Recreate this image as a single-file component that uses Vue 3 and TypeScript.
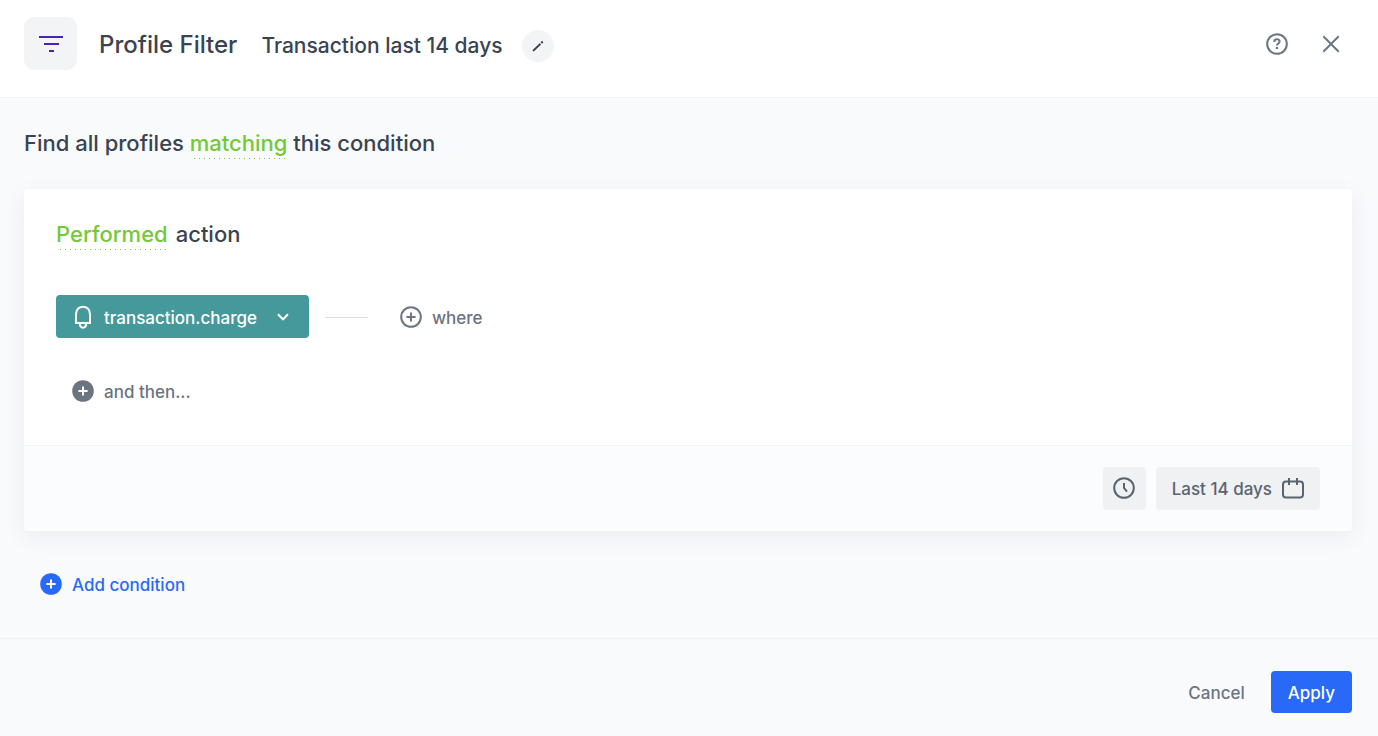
<script setup lang="ts">
import { ref } from 'vue'

const filterName = ref('Transaction last 14 days')
const eventName = ref('transaction.charge')
const period = ref('Last 14 days')
</script>

<template>
  <div class="dialog">
    <header class="header">
      <span class="badge">
        <svg width="24" height="24" viewBox="0 0 24 24" fill="#4a22b5" aria-hidden="true">
          <rect x="0" y="4" width="24" height="2" />
          <rect x="5" y="11" width="15" height="2" />
          <rect x="10" y="18" width="5" height="2" />
        </svg>
      </span>
      <h1 class="title">Profile Filter</h1>
      <span class="name">{{ filterName }}</span>
      <button class="edit" type="button" aria-label="Edit name">
        <svg width="12" height="12" viewBox="0 0 12 12" fill="none" stroke="#363e4b" stroke-width="2" aria-hidden="true">
          <path d="M1.6 10.4 L7.9 4.4" stroke-linecap="round" />
          <path d="M9.3 2.9 L10.7 1.6" />
        </svg>
      </button>
      <div class="tools">
        <button class="plain" type="button" aria-label="Help">
          <svg width="22" height="22" viewBox="0 0 22 22" fill="none" stroke="#6b7683" stroke-width="2" aria-hidden="true">
            <circle cx="11" cy="11" r="9.8" />
            <path d="M8.3 9 V8.6 C8.3 5.4 13.6 5.4 13.6 8.5 C13.6 10.6 11 10.4 11 12.6" />
            <path d="M11 14 V16" stroke-width="2.2" />
          </svg>
        </button>
        <button class="plain" type="button" aria-label="Close">
          <svg width="22" height="22" viewBox="0 0 22 22" fill="none" stroke="#6b7683" stroke-width="2" aria-hidden="true">
            <path d="M3.3 3.3 L18.7 18.7 M18.7 3.3 L3.3 18.7" />
          </svg>
        </button>
      </div>
    </header>

    <main class="body">
      <h2 class="sentence">
        Find all profiles <button class="toggle" type="button">matching</button> this condition
      </h2>

      <section class="card">
        <div class="rules">
          <h3 class="sentence action">
            <button class="toggle" type="button">Performed</button>
            <span>action</span>
          </h3>
          <div class="row">
            <button class="event" type="button">
              <svg width="22" height="24" viewBox="0 0 22 24" fill="none" stroke="#fff" stroke-width="2" aria-hidden="true">
                <path d="M4 18 V9 C4 -0.7 18 -0.7 18 9 V18" />
                <path d="M3 18 H19" />
                <path d="M7.8 18.5 C7.8 24 14.2 24 14.2 18.5" />
              </svg>
              <span class="event-name">{{ eventName }}</span>
              <svg width="12" height="8" viewBox="0 0 12 8" fill="none" stroke="#fff" stroke-width="2" aria-hidden="true">
                <path d="M1 1.2 L6 6.4 L11 1.2" />
              </svg>
            </button>
            <span class="line"></span>
            <button class="link" type="button">
              <svg width="22" height="22" viewBox="0 0 22 22" fill="none" stroke="#6b7683" stroke-width="2" aria-hidden="true">
                <circle cx="11" cy="11" r="9.8" />
                <path d="M11 6.4 V15.6 M6.4 11 H15.6" />
              </svg>
              <span class="label">where</span>
            </button>
          </div>
          <button class="link then" type="button">
            <svg width="22" height="22" viewBox="0 0 22 22" fill="none" stroke="#fff" stroke-width="2" aria-hidden="true">
              <circle cx="11" cy="11" r="10.8" fill="#6c7480" stroke="none" />
              <path d="M11 6.4 V15.6 M6.4 11 H15.6" />
            </svg>
            <span class="label">and then...</span>
          </button>
        </div>
        <div class="timing">
          <button class="chip clock" type="button" aria-label="Time of day">
            <svg width="22" height="22" viewBox="0 0 22 22" fill="none" stroke="#5a6470" stroke-width="2" aria-hidden="true">
              <circle cx="11" cy="11" r="9.8" />
              <path d="M11 6 V11 L14 14.6" />
            </svg>
          </button>
          <button class="chip" type="button">
            <span class="label">{{ period }}</span>
            <svg width="22" height="22" viewBox="0 0 22 22" fill="none" stroke="#5a6470" stroke-width="2" aria-hidden="true">
              <rect x="1" y="4.5" width="20" height="16" rx="3" />
              <path d="M7 1 V8 M15 1 V8" />
            </svg>
          </button>
        </div>
      </section>

      <button class="link add" type="button">
        <svg width="22" height="22" viewBox="0 0 22 22" fill="none" stroke="#fff" stroke-width="2" aria-hidden="true">
          <circle cx="11" cy="11" r="10.8" fill="#2869f8" stroke="none" />
          <path d="M11 6.4 V15.6 M6.4 11 H15.6" />
        </svg>
        <span class="label">Add condition</span>
      </button>
    </main>

    <footer class="footer">
      <button class="cancel" type="button"><span class="label">Cancel</span></button>
      <button class="apply" type="button"><span class="label">Apply</span></button>
    </footer>
  </div>
</template>

<style>
body {
  margin: 0;
  background: #f9fafc;
}
</style>

<style scoped>
.dialog {
  min-height: 100vh;
  display: flex;
  flex-direction: column;
  font-family: Inter, "Liberation Sans", sans-serif;
  font-weight: 500;
  color: #3a4350;
}
button {
  font: inherit;
  color: inherit;
  border: 0;
  padding: 0;
  margin: 0;
  background: none;
  cursor: pointer;
}
svg {
  display: block;
  flex: none;
}
h1, h2, h3 {
  margin: 0;
  font-weight: 500;
}
.header {
  display: flex;
  align-items: center;
  padding: 17px 36px 27px 24px;
  background: #fff;
  border-bottom: 1px solid #f1f2f4;
}
.badge {
  display: flex;
  align-items: center;
  justify-content: center;
  width: 53px;
  height: 53px;
  margin-right: 22px;
  border-radius: 10px;
  background: #f3f4f6;
}
.title {
  margin-right: 24px;
  padding-top: 2px;
  font-size: 24px;
  line-height: 32px;
}
.name {
  margin-right: 19px;
  padding-top: 4px;
  font-size: 21px;
  line-height: 32px;
}
.edit {
  display: flex;
  align-items: center;
  justify-content: center;
  width: 32px;
  height: 32px;
  margin-top: 4px;
  border-radius: 50%;
  background: #f3f4f6;
}
.tools {
  display: flex;
  gap: 32px;
  margin-left: auto;
}
.body {
  flex: 1;
  padding: 29px 26px 0 24px;
}
.sentence {
  font-size: 22px;
  line-height: 32px;
}
.toggle {
  color: #74c936;
  background: repeating-linear-gradient(to right, transparent 0 4px, #74c936 4px 5px) left bottom / 100% 1px no-repeat;
}
.card {
  margin-top: 30px;
  border-radius: 4px;
  background: #fff;
  box-shadow: 0 6px 24px rgba(30, 40, 60, 0.06);
}
.rules {
  padding: 29px 32px 40px;
}
.action {
  display: flex;
  gap: 8px;
}
.row {
  display: flex;
  align-items: center;
  margin-top: 45px;
}
.event {
  display: flex;
  align-items: center;
  height: 43px;
  padding: 0 20px 0 16px;
  border-radius: 4px;
  background: #46999a;
  color: #fff;
  font-size: 17px;
  line-height: 24px;
}
.event-name {
  margin: 2px 20px 0 10px;
}
.line {
  width: 43px;
  height: 1px;
  margin: 1px 32px 0 16px;
  background: #dadde1;
}
.label {
  padding-top: 2px;
}
.link {
  display: flex;
  align-items: center;
  gap: 10px;
  font-size: 17px;
  line-height: 26px;
  color: #6b7480;
}
.then {
  margin: 39px 0 0 16px;
}
.timing {
  display: flex;
  justify-content: flex-end;
  gap: 10px;
  padding: 21px 32px;
  border-top: 1px solid #f1f2f4;
  border-radius: 0 0 4px 4px;
  background: #fbfcfe;
}
.chip {
  display: flex;
  align-items: center;
  gap: 10px;
  height: 43px;
  padding: 0 16px 2px;
  border-radius: 4px;
  background: #f0f1f3;
  color: #5a6470;
  font-size: 17px;
}
.clock {
  width: 43px;
  padding: 0 10px 2px;
}
.add {
  margin: 39px 0 0 16px;
  color: #2869f8;
}
.footer {
  display: flex;
  align-items: center;
  justify-content: flex-end;
  gap: 26px;
  padding: 32px 26px 23px;
  border-top: 1px solid #f1f2f4;
  font-size: 17px;
}
.cancel,
.apply {
  display: flex;
  align-items: center;
  height: 42px;
}
.cancel {
  color: #6b7480;
}
.apply {
  padding: 0 17px;
  border-radius: 4px;
  background: #2869f8;
  color: #fff;
}
</style>
